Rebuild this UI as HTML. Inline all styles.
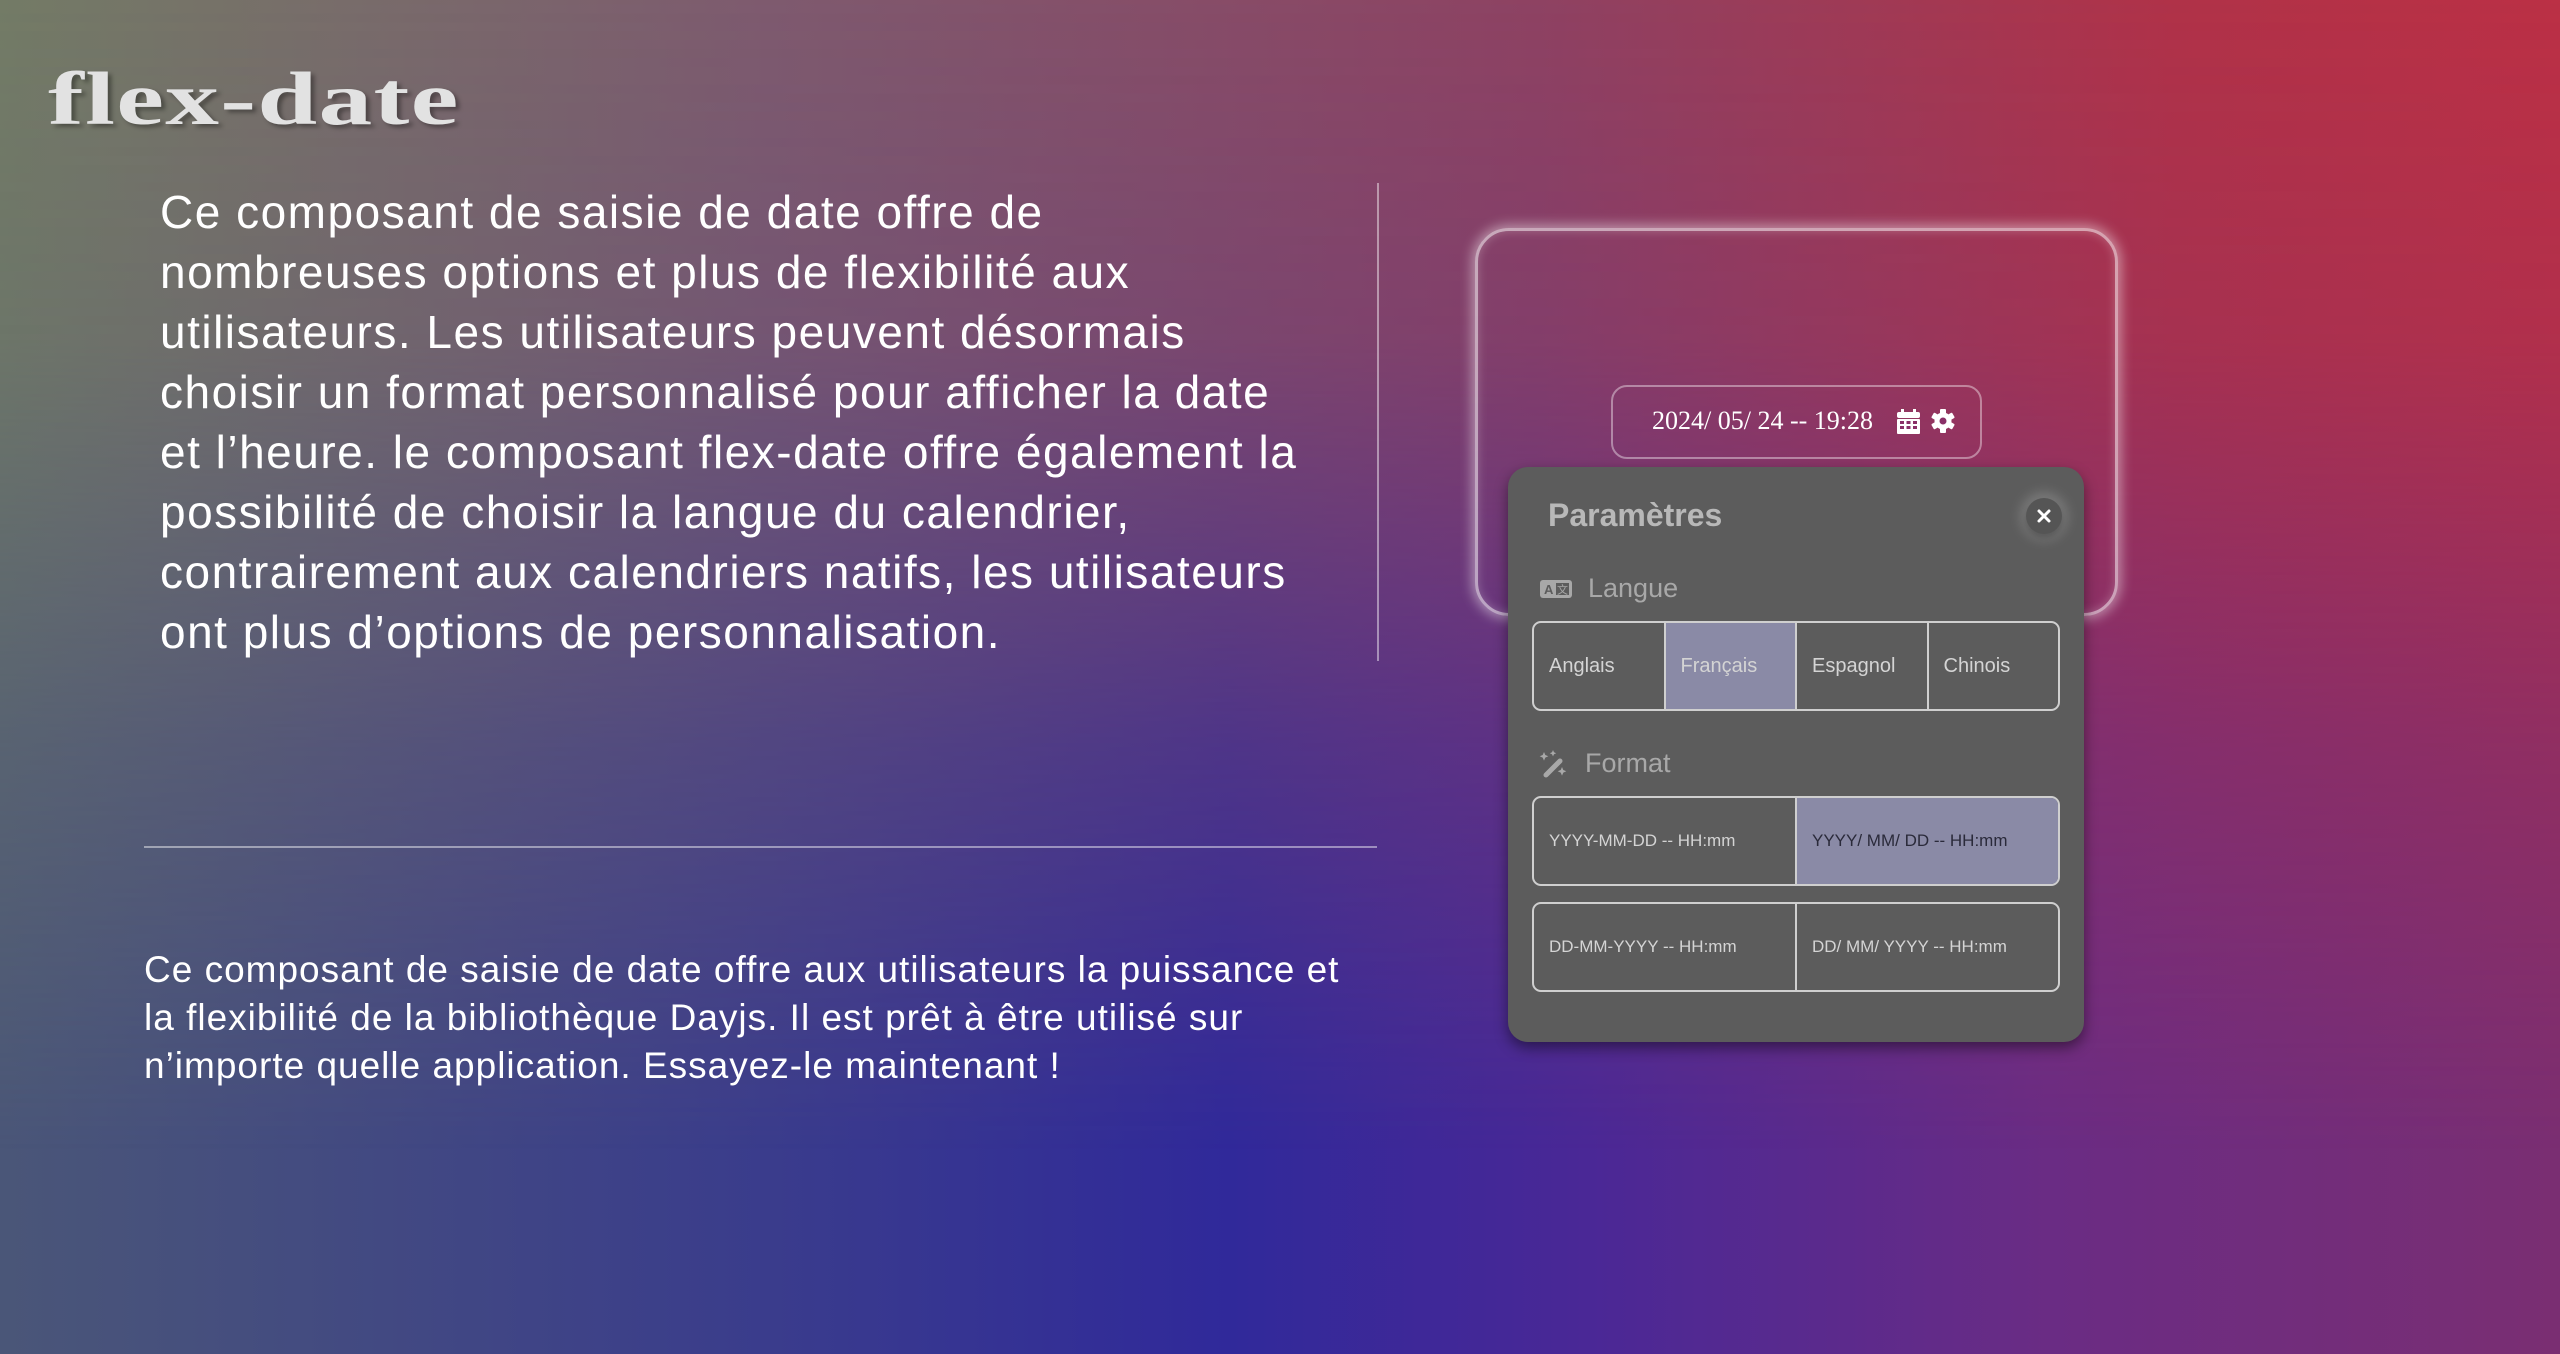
<!DOCTYPE html>
<html><head><meta charset="utf-8">
<style>
*{margin:0;padding:0;box-sizing:border-box}
html,body{width:2560px;height:1354px;overflow:hidden}
body{position:relative;font-family:"Liberation Sans",sans-serif;
background:linear-gradient(to right,#4a5678 0%,#3a3c8c 30%,#30299a 48%,#4a2896 62%,#6a2c84 80%,#7a2e72 100%);}
.top{position:absolute;inset:0;background:linear-gradient(to right,#737b66 0%,#7e5a6e 30%,#8e4262 60%,#b03248 85%,#bb3045 100%);
-webkit-mask-image:linear-gradient(to bottom,#000 0%,rgba(0,0,0,.85) 25%,rgba(0,0,0,.35) 55%,transparent 85%);
mask-image:linear-gradient(to bottom,#000 0%,rgba(0,0,0,.85) 25%,rgba(0,0,0,.35) 55%,transparent 85%);}
.logo{position:absolute;left:48px;top:62px;font-family:"Liberation Serif",serif;font-weight:900;font-size:84px;color:#e2e2e2;letter-spacing:1px;text-shadow:3px 3px 4px rgba(0,0,0,.35);line-height:84px;transform:scale(1.28,0.9);transform-origin:left top}
.p1{position:absolute;left:160px;top:182px;width:1300px;color:#fff;font-size:46px;letter-spacing:1.5px;line-height:60px;font-weight:300}
.p2{position:absolute;left:144px;top:946px;width:1300px;color:#fff;font-size:37px;letter-spacing:1px;line-height:48px}
.vl{position:absolute;left:1377px;top:183px;width:2px;height:478px;background:rgba(255,255,255,.45)}
.hl{position:absolute;left:144px;top:846px;width:1233px;height:2px;background:rgba(255,255,255,.45)}
.glow{position:absolute;left:1475px;top:228px;width:643px;height:388px;border-radius:34px;border:3px solid rgba(255,255,255,.55);box-shadow:0 0 12px 3px rgba(255,255,255,.45),inset 0 0 10px rgba(255,255,255,.25)}
.inp{position:absolute;left:1611px;top:385px;width:371px;height:74px;border-radius:16px;border:2px solid rgba(255,255,255,.4)}
.date{position:absolute;left:1652px;top:403px;font-family:"Liberation Serif",serif;font-size:26px;color:#fff;line-height:36px}
.panel{position:absolute;left:1508px;top:467px;width:576px;height:575px;background:#5c5c5c;border-radius:20px;box-shadow:0 6px 14px rgba(0,0,0,.45)}
.title{position:absolute;left:40px;top:30px;font-size:32px;font-weight:bold;color:#b8b8b8}
.close{position:absolute;left:518px;top:31px;width:36px;height:36px;border-radius:50%;background:#555;box-shadow:0 0 14px 4px rgba(255,255,255,.25),0 3px 6px rgba(0,0,0,.4)}
.lbl{position:absolute;font-size:27px;color:#a8a8a8}
.grid{position:absolute;left:24px;width:528px;display:flex;border:2px solid #cfcfcf;border-radius:9px;overflow:hidden}
.grid div{flex:1;border-left:2px solid #cfcfcf;display:flex;align-items:center;padding-left:15px;color:#d4d4d4}
.grid div:first-child{border-left:none}
.sel{background:#8a8aa6}
</style></head><body>
<div class="top"></div>
<div class="logo">flex-date</div>
<div class="p1">Ce composant de saisie de date offre de<br>nombreuses options et plus de flexibilité aux<br>utilisateurs. Les utilisateurs peuvent désormais<br>choisir un format personnalisé pour afficher la date<br>et l’heure. le composant flex-date offre également la<br>possibilité de choisir la langue du calendrier,<br>contrairement aux calendriers natifs, les utilisateurs<br>ont plus d’options de personnalisation.</div>
<div class="vl"></div>
<div class="hl"></div>
<div class="p2">Ce composant de saisie de date offre aux utilisateurs la puissance et<br>la flexibilité de la bibliothèque Dayjs. Il est prêt à être utilisé sur<br>n’importe quelle application. Essayez-le maintenant !</div>
<div class="glow"></div>
<div class="inp"></div>
<div class="date">2024/ 05/ 24 -- 19:28</div>
<svg style="position:absolute;left:1897px;top:409px" width="23" height="25" viewBox="0 0 23 25"><rect x="4" y="0" width="3" height="5" fill="#fff"/><rect x="16" y="0" width="3" height="5" fill="#fff"/><rect x="0" y="3" width="23" height="6" rx="2" fill="#fff"/><rect x="0" y="10" width="23" height="15" rx="1" fill="#fff"/><g fill="#8a3068"><rect x="3" y="12" width="4" height="3"/><rect x="9.5" y="12" width="4" height="3"/><rect x="16" y="12" width="4" height="3"/><rect x="3" y="17" width="4" height="3"/><rect x="9.5" y="17" width="4" height="3"/><rect x="16" y="17" width="4" height="3"/></g></svg>
<svg style="position:absolute;left:1931px;top:409px" width="24" height="24" viewBox="0 0 24 24"><g fill="#fff" transform="translate(12 12)"><circle r="8.5"/><rect x="-3" y="-12" width="6" height="6" rx="1"/><rect x="-3" y="-12" width="6" height="6" rx="1" transform="rotate(60)"/><rect x="-3" y="-12" width="6" height="6" rx="1" transform="rotate(120)"/><rect x="-3" y="-12" width="6" height="6" rx="1" transform="rotate(180)"/><rect x="-3" y="-12" width="6" height="6" rx="1" transform="rotate(240)"/><rect x="-3" y="-12" width="6" height="6" rx="1" transform="rotate(300)"/></g><circle cx="12" cy="12" r="3.5" fill="#8a3068"/></svg>
<div class="panel">
 <div class="title">Paramètres</div>
 <div class="close"><svg width="36" height="36" viewBox="0 0 36 36"><path d="M13 13L23 23M23 13L13 23" stroke="#fff" stroke-width="3" stroke-linecap="round"/></svg></div>
 <svg style="position:absolute;left:32px;top:113px" width="32" height="18" viewBox="0 0 32 18"><rect width="32" height="18" rx="3" fill="#a8a8a8"/><text x="4" y="14" font-family="Liberation Sans" font-weight="bold" font-size="13" fill="#5c5c5c">A</text><rect x="16" y="3" width="13" height="12" fill="#5c5c5c"/><text x="17" y="13.5" font-family="Noto Sans CJK SC,sans-serif" font-size="11" fill="#a8a8a8">文</text></svg>
 <div class="lbl" style="left:80px;top:106px">Langue</div>
 <div class="grid" style="top:154px;height:90px;font-size:20px">
  <div>Anglais</div><div class="sel">Français</div><div>Espagnol</div><div>Chinois</div>
 </div>
 <svg style="position:absolute;left:30px;top:282px" width="30" height="30" viewBox="0 0 30 30"><path d="M8 26L22 12" stroke="#a8a8a8" stroke-width="5" stroke-linecap="round"/><path d="M6 3l1.3 3 3 1.3-3 1.3L6 11.6 4.7 8.6 1.7 7.3l3-1.3z M15 1l1 2.2 2.2 1-2.2 1L15 7.4 14 5.2 11.8 4.2 14 3.2z M24 18l1.3 3 3 1.3-3 1.3L24 26.6l-1.3-3-3-1.3 3-1.3z" fill="#a8a8a8"/></svg>
 <div class="lbl" style="left:77px;top:281px">Format</div>
 <div class="grid" style="top:329px;height:90px;font-size:17px">
  <div>YYYY-MM-DD -- HH:mm</div><div class="sel" style="color:#2a2a3a">YYYY/ MM/ DD -- HH:mm</div>
 </div>
 <div class="grid" style="top:435px;height:90px;font-size:17px">
  <div>DD-MM-YYYY -- HH:mm</div><div>DD/ MM/ YYYY -- HH:mm</div>
 </div>
</div>
</body></html>
